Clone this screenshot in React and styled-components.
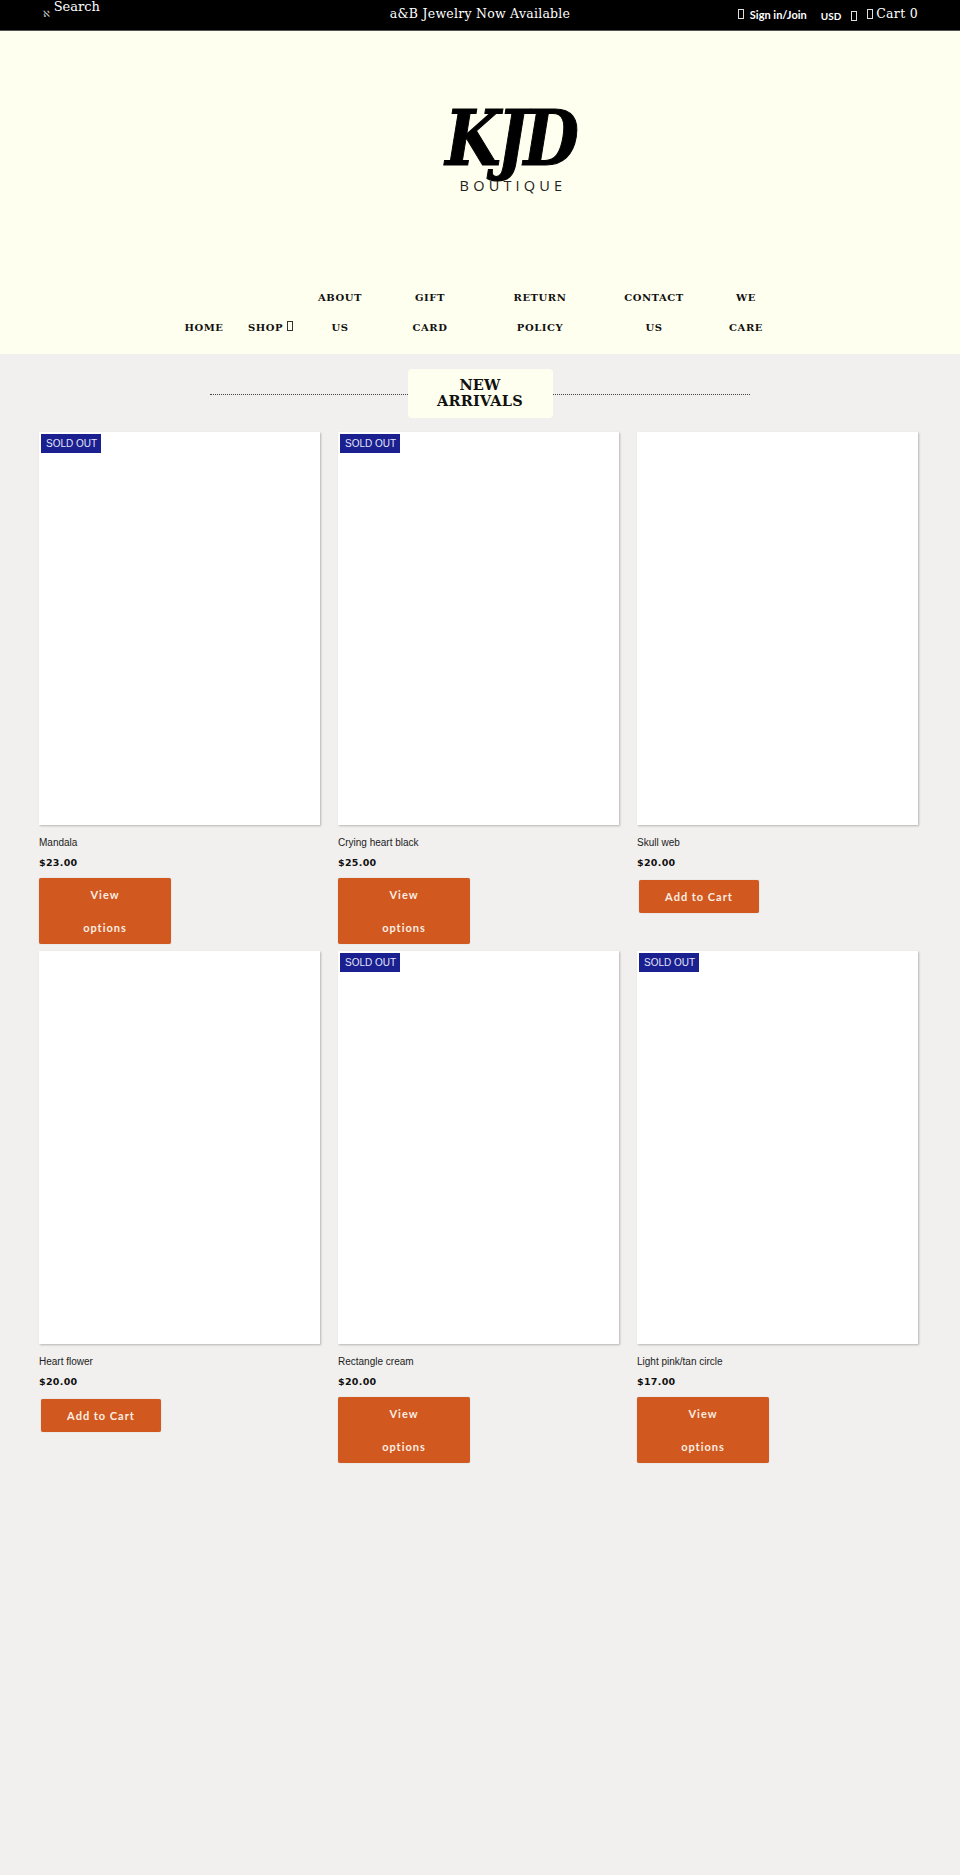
import React from "react";
import styled, { createGlobalStyle } from "styled-components";

const Global = createGlobalStyle`
  html, body { margin: 0; padding: 0; background: #f1f0ee; }
  * { box-sizing: border-box; }
`;
const Page = styled.div`
  min-height: 1875px;
  background: #f1f0ee;
  font-family: "DejaVu Serif", serif;
  overflow: hidden;
`;
const TopBar = styled.div`
  height: 31px;
  background: #000;
  border-bottom: 1px solid #555;
  color: #fff;
  display: grid;
  grid-template-columns: 1fr auto 1fr;
  padding: 0 42px;
  font-size: 12.5px;
`;
const SearchBox = styled.div`
  display: flex;
  align-items: flex-start;
  padding-left: 1px;
  gap: 4px;
`;
const SearchGlyph = styled.span`
  font-family: "DejaVu Sans", sans-serif;
  font-size: 9px;
  color: #ccc;
  line-height: 9px;
  margin-top: 10px;
`;
const SearchText = styled.span`
  font-size: 13px;
  line-height: 14px;
`;
const Promo = styled.div`
  line-height: 28px;
  letter-spacing: 0.25px;
`;
const Account = styled.div`
  display: flex;
  justify-content: flex-end;
  align-items: center;
  height: 28px;
`;
const Tofu = styled.span`
  display: inline-block;
  width: 6px;
  height: 10px;
  border: 1px solid ${p => p.$c || "#ddd"};
  flex: none;
`;
const CurrencyTofu = styled(Tofu)`
  margin: 3px 10px 0 0;
`;
const SignIn = styled.span`
  font-family: Lato, sans-serif;
  font-weight: 700;
  font-size: 11px;
  margin-left: 6px;
`;
const Currency = styled.span`
  font-family: Lato, sans-serif;
  font-weight: 700;
  font-size: 10px;
  margin: 3px 10px 0 14px;
`;
const CartText = styled.span`
  line-height: 28px;
  letter-spacing: 0.3px;
  margin-left: 3px;
`;
const Masthead = styled.header`
  background: #ffffef;
  height: 323px;
  display: flex;
  flex-direction: column;
`;
const LogoWrap = styled.div`
  height: 252px;
  display: flex;
  justify-content: center;
  padding-top: 72px;
`;
const Logo = styled.div`
  width: 140px;
  margin-left: 60px;
  display: flex;
  flex-direction: column;
  align-items: center;
`;
const LogoMark = styled.div`
  font-family: "DejaVu Serif", serif;
  font-weight: 700;
  font-style: italic;
  font-size: 68px;
  line-height: 70px;
  letter-spacing: -4px;
  color: #000;
  -webkit-text-stroke: 1px #000;
  white-space: nowrap;
  transform: scale(0.94, 1.14);
`;
const LogoSub = styled.div`
  font-family: "Open Sans", sans-serif;
  font-size: 14.5px;
  line-height: 16px;
  letter-spacing: 4.2px;
  color: #222;
  margin: 5px 0 0 6px;
`;
const Nav = styled.nav`
  display: flex;
  justify-content: center;
  align-items: flex-end;
  padding-right: 9px;
`;
const NavItem = styled.a`
  width: ${p => p.$w}px;
  text-align: center;
  font-weight: 700;
  font-size: 10px;
  line-height: 30px;
  letter-spacing: 0.55px;
  color: #111;
`;
const Main = styled.main`
  padding: 15px 42px 0 39px;
`;
const Heading = styled.div`
  position: relative;
  display: flex;
  justify-content: center;
  margin-bottom: 14px;
`;
const Rule = styled.div`
  position: absolute;
  top: 25px;
  left: 171px;
  width: 540px;
  border-top: 1px dotted #444;
`;
const Title = styled.h2`
  position: relative;
  margin: 0 0 0 3px;
  width: 145px;
  height: 49px;
  padding: 8px 20px 0;
  background: #ffffef;
  border-radius: 4px;
  text-align: center;
  font-size: 14.5px;
  line-height: 16px;
  font-weight: 700;
  letter-spacing: 0.2px;
  color: #111;
`;
const Grid = styled.div`
  display: grid;
  grid-template-columns: repeat(3, 281px);
  column-gap: 18px;
  grid-auto-rows: 519px;
`;
const Card = styled.article`
  display: flex;
  flex-direction: column;
  align-items: flex-start;
`;
const Photo = styled.div`
  position: relative;
  width: 281px;
  height: 393px;
  background: #fff;
  box-shadow: 1px 1px 2px rgba(0, 0, 0, 0.25);
`;
const Badge = styled.span`
  position: absolute;
  top: 2px;
  left: 2px;
  background: #1a2090;
  color: #e4e4f6;
  font-family: "Liberation Sans", sans-serif;
  font-size: 10px;
  line-height: 19px;
  padding: 0 4px 0 5px;
`;
const Name = styled.div`
  margin-top: 11px;
  font-family: "Liberation Sans", sans-serif;
  font-size: 10px;
  line-height: 13px;
  color: #222;
`;
const Price = styled.div`
  margin-top: 7px;
  font-family: "DejaVu Sans", sans-serif;
  font-weight: 700;
  font-size: 9.5px;
  line-height: 13px;
  letter-spacing: 0.3px;
  color: #111;
`;
const ViewButton = styled.a`
  margin-top: 9px;
  width: 132px;
  height: 66px;
  background: #d1581f;
  border-radius: 2px;
  box-shadow: 0 0 1px rgba(0,0,0,.3);
  color: #fbeee2;
  font-family: Lato, sans-serif;
  font-weight: 700;
  font-size: 11px;
  line-height: 33px;
  letter-spacing: 1px;
  text-align: center;
  padding: 0 40px;
`;
const CartButton = styled.a`
  margin: 11px 0 0 2px;
  width: 120px;
  height: 33px;
  background: #d1581f;
  border-radius: 2px;
  box-shadow: 0 0 1px rgba(0,0,0,.3);
  color: #fbeee2;
  font-family: Lato, sans-serif;
  font-weight: 700;
  font-size: 11px;
  line-height: 33px;
  letter-spacing: 1px;
  text-align: center;
`;

const products = [
  { name: "Mandala", price: "$23.00", sold: true },
  { name: "Crying heart black", price: "$25.00", sold: true },
  { name: "Skull web", price: "$20.00", sold: false },
  { name: "Heart flower", price: "$20.00", sold: false },
  { name: "Rectangle cream", price: "$20.00", sold: true },
  { name: "Light pink/tan circle", price: "$17.00", sold: true },
];
const navItems = [
  { w: 64, label: "HOME" },
  { w: 69, label: "SHOP", tofu: true },
  { w: 70, label: "ABOUT US" },
  { w: 110, label: "GIFT CARD" },
  { w: 110, label: "RETURN POLICY" },
  { w: 118, label: "CONTACT US" },
  { w: 66, label: "WE CARE" },
];

export default function App() {
  return (
    <Page>
      <Global />
      <TopBar>
        <SearchBox>
          <SearchGlyph>ℵ</SearchGlyph>
          <SearchText>Search</SearchText>
        </SearchBox>
        <Promo>a&amp;B Jewelry Now Available</Promo>
        <Account>
          <Tofu />
          <SignIn>Sign in/Join</SignIn>
          <Currency>USD</Currency>
          <CurrencyTofu />
          <Tofu />
          <CartText>Cart 0</CartText>
        </Account>
      </TopBar>
      <Masthead>
        <LogoWrap>
          <Logo>
            <LogoMark>KJD</LogoMark>
            <LogoSub>BOUTIQUE</LogoSub>
          </Logo>
        </LogoWrap>
        <Nav>
          {navItems.map(n => (
            <NavItem key={n.label} $w={n.w}>
              {n.label.split(" ").map((word, i) => (
                <React.Fragment key={word}>
                  {i > 0 && <br />}
                  {word}
                </React.Fragment>
              ))}
              {n.tofu && <> <Tofu $c="#333" /></>}
            </NavItem>
          ))}
        </Nav>
      </Masthead>
      <Main>
        <Heading>
          <Rule />
          <Title>NEW ARRIVALS</Title>
        </Heading>
        <Grid>
          {products.map(p => (
            <Card key={p.name}>
              <Photo>{p.sold && <Badge>SOLD OUT</Badge>}</Photo>
              <Name>{p.name}</Name>
              <Price>{p.price}</Price>
              {p.sold ? <ViewButton>View options</ViewButton> : <CartButton>Add to Cart</CartButton>}
            </Card>
          ))}
        </Grid>
      </Main>
    </Page>
  );
}
